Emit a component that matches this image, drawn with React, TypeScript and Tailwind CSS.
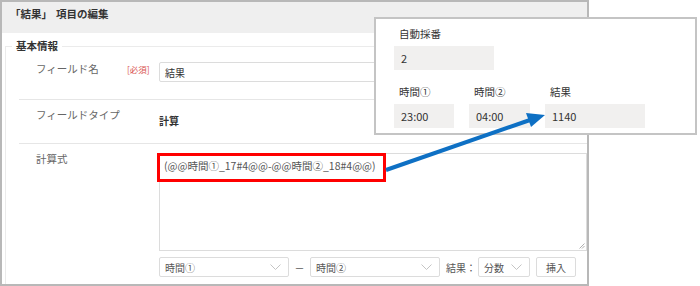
import React from "react";

// chevron used by the small selects
function Chevron() {
  return (
    <svg width="11" height="6" viewBox="0 0 11 6" className="shrink-0">
      <polyline points="0.5,0.5 5.5,5.5 10.5,0.5" fill="none" stroke="#c4c4c4" strokeWidth="1" />
    </svg>
  );
}

function Select({ label, width }: { label: string; width: string }) {
  return (
    <div
      className={`${width} h-[20px] flex items-center justify-between border border-[#dcdcdc] rounded-[2px] bg-white pl-[5px] pr-[7px] text-[10px] text-[#555]`}
    >
      <span>{label}</span>
      <Chevron />
    </div>
  );
}

function FieldBox({ value, width }: { value: string; width: string }) {
  return (
    <div className={`${width} h-[24px] bg-[#f1f0ef] flex items-center pl-[7px] text-[11px] text-[#333]`}>
      {value}
    </div>
  );
}

export default function App() {
  return (
    <div className="relative w-[700px] h-[286px] bg-white overflow-hidden font-['Noto_Sans_CJK_JP','Liberation_Sans',sans-serif]">
      {/* main editor panel */}
      <div className="w-[589px] h-[286px] border-2 border-[#b8b8b8] overflow-hidden flex flex-col">
        <div className="h-[31px] shrink-0 bg-[#efefef] pl-[8px] pt-[5px] text-[10.5px] leading-[14px] font-bold text-[#333]">
          <span>「結果」</span>
          <span className="ml-[4px]">項目の編集</span>
        </div>

        <fieldset className="ml-[3px] mt-[6px] border-t border-l border-[#ebebeb] flex-1">
          <legend className="ml-[6px] px-[4px] text-[10.5px] leading-[14px] font-bold text-[#333]">基本情報</legend>

          <div className="ml-[13px]">
            {/* row: field name */}
            <div className="h-[47px] flex border-b border-[#e6e6e6] pl-[17px]">
              <div className="w-[91px] pt-[9px] text-[10.5px] leading-[14px] text-[#666]">フィールド名</div>
              <div className="w-[32px] pt-[9px] text-[8.5px] leading-[14px] text-[#d9534f]">[必須]</div>
              <div className="flex-1 pt-[9px]">
                <div className="h-[20px] border border-[#dcdcdc] rounded-[2px] flex items-center pl-[5px] text-[10px] text-[#333]">
                  結果
                </div>
              </div>
            </div>

            {/* row: field type */}
            <div className="h-[44px] flex border-b border-[#e6e6e6] pl-[17px]">
              <div className="w-[123px] pt-[8px] text-[10.5px] leading-[14px] text-[#666]">フィールドタイプ</div>
              <div className="flex-1 pt-[14px] text-[10px] leading-[14px] font-bold text-[#333]">計算</div>
            </div>

            {/* row: formula */}
            <div className="flex pl-[17px]">
              <div className="w-[123px] pt-[8px] text-[10.5px] leading-[14px] text-[#666]">計算式</div>
              <div className="flex-1 pt-[9px]">
                <div className="relative h-[98px] border border-[#dcdcdc] pl-[4px] pt-[5px] text-[10.5px] leading-[14px] text-[#555]">
                  (@@時間①_17#4@@-@@時間②_18#4@@)
                  <svg width="6" height="6" viewBox="0 0 6 6" className="absolute right-[1px] bottom-[1px]">
                    <line x1="0.5" y1="5.5" x2="5.5" y2="0.5" stroke="#b0b0b0" />
                    <line x1="3" y1="5.5" x2="5.5" y2="3" stroke="#b0b0b0" />
                  </svg>
                </div>
                <div className="mt-[6px] flex items-center">
                  <Select label="時間①" width="w-[130px]" />
                  <span className="w-[21px] text-center text-[10px] text-[#555]">－</span>
                  <Select label="時間②" width="w-[130px]" />
                  <span className="ml-[6px] w-[32px] text-[10px] text-[#555]">結果：</span>
                  <Select label="分数" width="w-[52px]" />
                  <div className="ml-[6px] w-[40px] h-[20px] border border-[#dcdcdc] rounded-[2px] flex items-center justify-center text-[10px] text-[#555]">
                    挿入
                  </div>
                </div>
              </div>
            </div>
          </div>
        </fieldset>
      </div>

      {/* red highlight on the formula */}
      <div className="absolute left-[157px] top-[153px] w-[229px] h-[29px] border-[3px] border-[#ff0000]" />

      {/* preview popup */}
      <div className="absolute left-[374px] top-[17px] w-[323px] h-[118px] border-2 border-[#c4c4c4] bg-white pl-[18px] pt-[8px]">
        <div className="pl-[5px] text-[10.5px] leading-[14px] text-[#333]">自動採番</div>
        <div className="mt-[5px]">
          <FieldBox value="2" width="w-[100px]" />
        </div>
        <div className="mt-[15px] flex gap-[15px]">
          <div>
            <div className="pl-[5px] text-[10.5px] leading-[14px] text-[#333]">時間①</div>
            <div className="mt-[5px]">
              <FieldBox value="23:00" width="w-[60px]" />
            </div>
          </div>
          <div>
            <div className="pl-[5px] text-[10.5px] leading-[14px] text-[#333]">時間②</div>
            <div className="mt-[5px]">
              <FieldBox value="04:00" width="w-[61px]" />
            </div>
          </div>
          <div>
            <div className="pl-[5px] text-[10.5px] leading-[14px] text-[#333]">結果</div>
            <div className="mt-[5px]">
              <FieldBox value="1140" width="w-[100px]" />
            </div>
          </div>
        </div>
      </div>

      {/* arrow from formula to result */}
      <svg className="absolute left-0 top-0 pointer-events-none" width="700" height="286" viewBox="0 0 700 286">
        <line x1="386" y1="170" x2="530" y2="120" stroke="#0e70c4" strokeWidth="4" />
        <polygon points="545,115 531,127 526,113" fill="#0e70c4" />
      </svg>
    </div>
  );
}
